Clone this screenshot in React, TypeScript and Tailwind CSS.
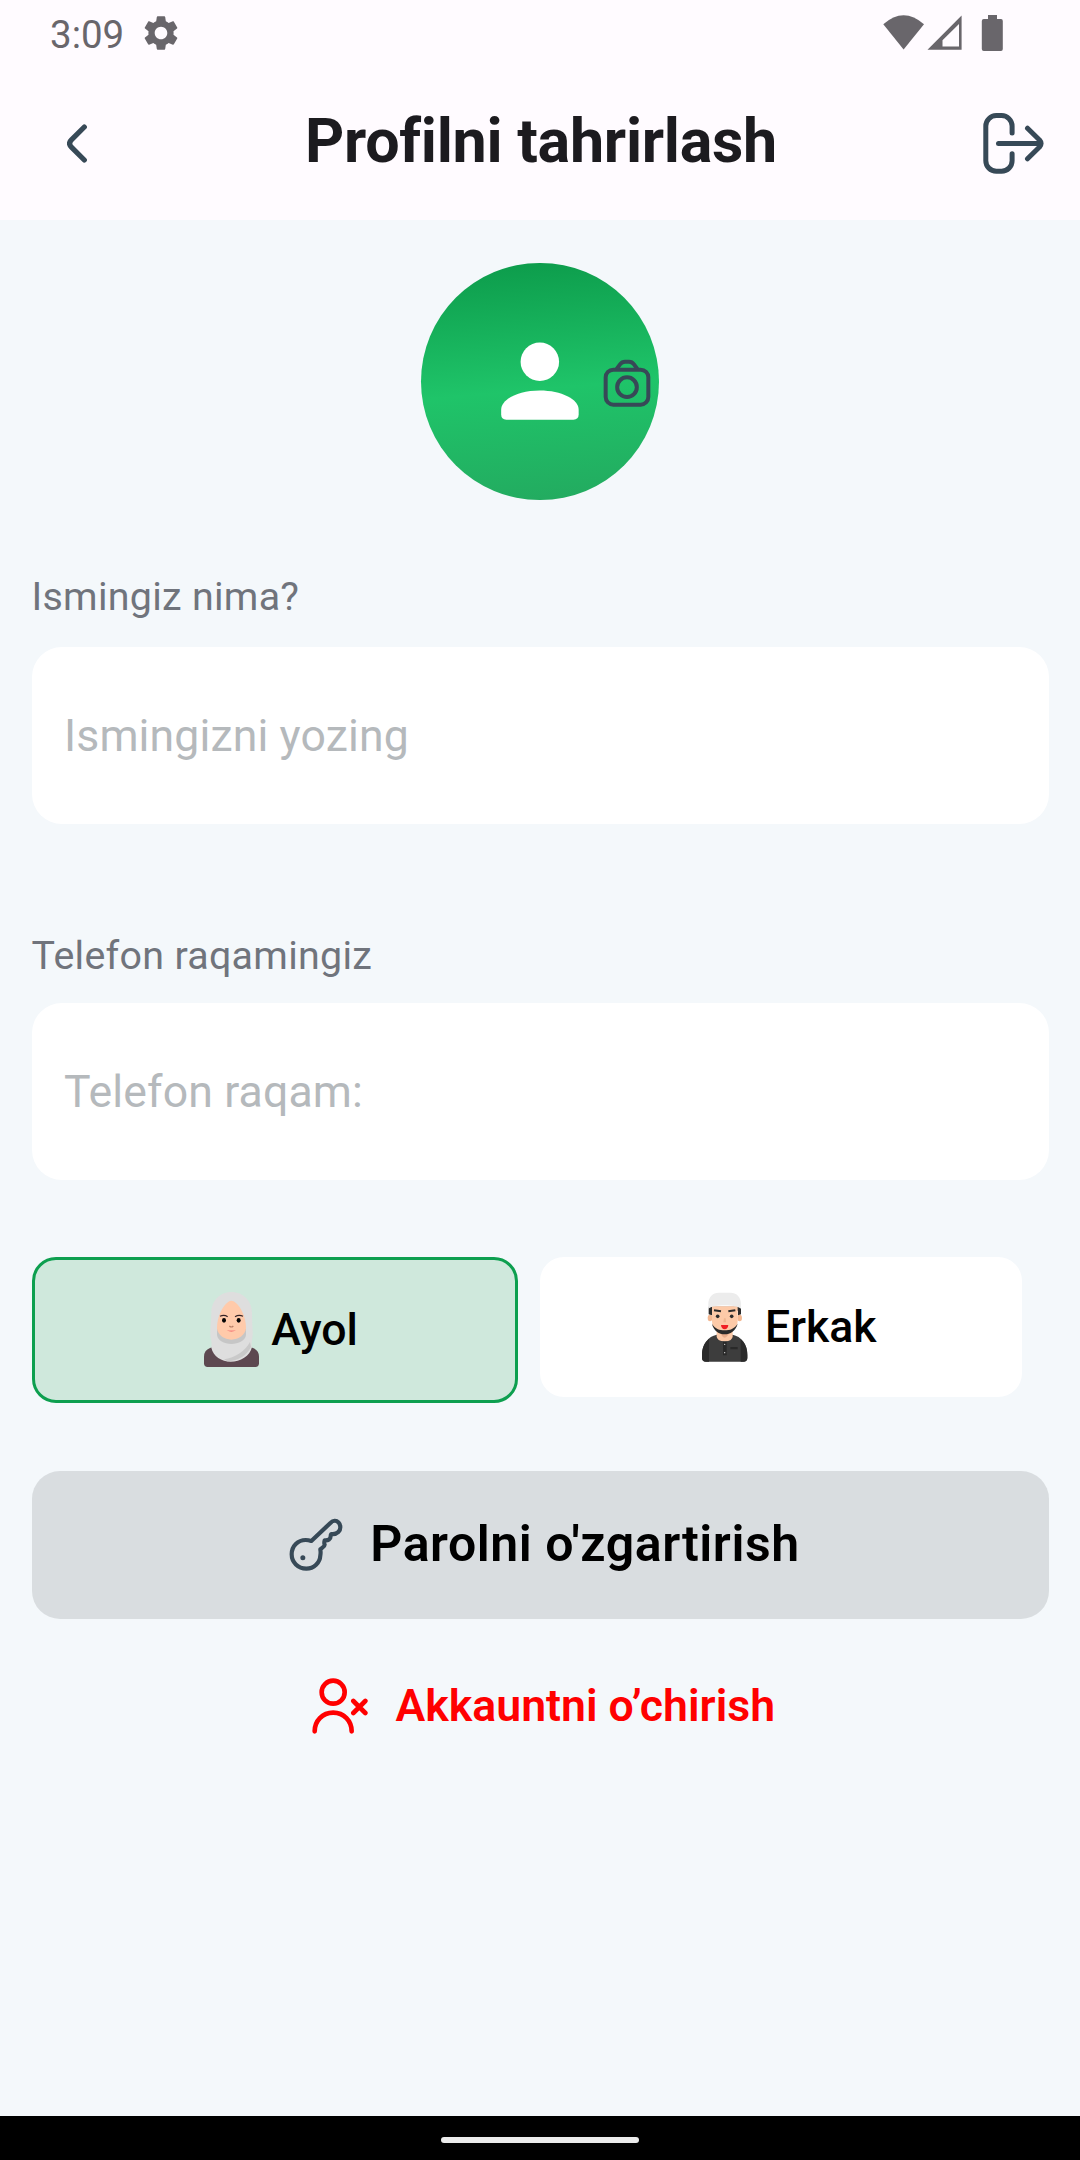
import React from "react";

function GearIcon() {
  return (
    <svg className="h-[42px] w-[42px]" viewBox="0 0 24 24" fill="#69666b">
      <path d="M19.14 12.94c.04-.3.06-.61.06-.94 0-.32-.02-.64-.07-.94l2.03-1.58c.18-.14.23-.41.12-.61l-1.92-3.32c-.12-.22-.37-.29-.59-.22l-2.39.96c-.5-.38-1.03-.7-1.62-.94l-.36-2.54c-.04-.24-.24-.41-.48-.41h-3.84c-.24 0-.43.17-.47.41l-.36 2.54c-.59.24-1.13.57-1.62.94l-2.39-.96c-.22-.08-.47 0-.59.22L2.74 8.87c-.12.21-.08.47.12.61l2.03 1.58c-.05.3-.09.63-.09.94s.02.64.07.94l-2.03 1.58c-.18.14-.23.41-.12.61l1.92 3.32c.12.22.37.29.59.22l2.39-.96c.5.38 1.03.7 1.62.94l.36 2.54c.05.24.24.41.48.41h3.84c.24 0 .44-.17.47-.41l.36-2.54c.59-.24 1.13-.56 1.62-.94l2.39.96c.22.08.47 0 .59-.22l1.92-3.32c.12-.22.07-.47-.12-.61l-2.01-1.58zM12 15.6c-1.98 0-3.6-1.62-3.6-3.6s1.62-3.6 3.6-3.6 3.6 1.62 3.6 3.6-1.62 3.6-3.6 3.6z" />
    </svg>
  );
}

function StatusIcons() {
  return (
    <svg className="h-[40px] w-[124px]" viewBox="881 13 124 40" fill="#69666b">
      <path d="M883.3 24.2Q903.6 6.200 924 24.200L903.600 49.500Z" />
      <path
        fillRule="evenodd"
        d="M961.600 15.500V49.700H927.500ZM959 24L942.500 40.300V46.600H959Z"
      />
      <path d="M988 15H997V19H1001Q1002.800 19 1002.800 21V49Q1002.800 51 1001 51H983.800Q981.800 51 981.800 49V21Q981.800 19 983.800 19H988Z" />
    </svg>
  );
}

function BackIcon() {
  return (
    <svg
      className="h-[39px] w-[20px]"
      viewBox="67 123.500 20 39"
      fill="none"
      stroke="#374957"
      strokeWidth="5.200"
      strokeLinecap="round"
    >
      <path d="M84.300 126.500L71.400 139.400Q67.800 143 71.400 146.600L84.300 159.500" />
    </svg>
  );
}

function LogoutIcon() {
  return (
    <svg
      className="h-[61px] w-[61px]"
      viewBox="983.500 112.500 61 61"
      fill="none"
      stroke="#374957"
      strokeWidth="5"
      strokeLinecap="round"
    >
      <path d="M1012.600 132.500V125.600A10.500 10.500 0 0 0 1002.100 115.100H996.800A10.500 10.500 0 0 0 986.300 125.600V160.200A10.500 10.500 0 0 0 996.800 170.700H1002.100A10.500 10.500 0 0 0 1012.600 160.200V153.300" />
      <path d="M999 143H1040.500" />
      <path d="M1028 127.700L1040 139.500Q1043 143 1040 146.500L1028 158.300" strokeLinejoin="round" />
    </svg>
  );
}

function PersonIcon() {
  return (
    <svg className="h-[78px] w-[78px]" viewBox="303 276 235 235" fill="#fff">
      <circle cx="420" cy="335.500" r="58" />
      <path d="M303.500 480C303.500 448 355 422 420 422S537 448 537 480V494Q537 510 521 510H319Q303.500 510 303.500 494Z" />
    </svg>
  );
}

function CameraIcon() {
  return (
    <svg
      className="absolute left-[182px] top-[96px] h-[48px] w-[48px]"
      viewBox="609 325 144 144"
      fill="none"
      stroke="#374957"
      strokeWidth="12"
    >
      <rect x="617" y="357" width="128" height="105" rx="23" />
      <path d="M650 355L660 341Q666 333 675 333H687Q696 333 702 341L712 355" />
      <circle cx="681" cy="409.500" r="29.500" />
    </svg>
  );
}

function WomanIcon() {
  return (
    <svg className="h-[75px] w-[55px] shrink-0" viewBox="72 153 165 225">
      <path
        d="M72 347Q72 328 90 321L105 316H204L219 321Q237 328 237 347V367Q237 378 226 378H83Q72 378 72 367Z"
        fill="#5d4850"
      />
      <path
        d="M154 153C119 153 94 180 94 215C94 237 91 252 91 275C91 295 97 300 94 320C99 346 125 362 152 362C181 362 210 346 216 318C213 301 219 290 218 272C217 250 216 235 216 215C216 180 190 153 154 153Z"
        fill="#dedede"
      />
      <path d="M111 262V282C113 298 132 309 154 309S196 298 198 282V262Z" fill="#c6c6c6" />
      <path d="M210 303C196 330 165 350 132 355L142 361C172 360 200 345 213 318Z" fill="#c9c9c9" />
      <path
        d="M154 179C139 179 111 216 111 262C113 282 133 296 154 296S196 282 198 262C198 216 170 179 154 179Z"
        fill="#ffcaaa"
      />
      <path d="M120 226Q132 220 143 227M165 227Q177 220 189 226" fill="none" stroke="#352427" strokeWidth="3.500" />
      <ellipse cx="132" cy="238" rx="6" ry="7" fill="#050505" />
      <ellipse cx="176" cy="238" rx="6" ry="7" fill="#050505" />
      <path d="M148 255Q154 261 160 255" fill="none" stroke="#b98068" strokeWidth="3.500" />
      <path d="M140 267Q154 270 168 267Q154 278 140 267Z" fill="#f57a78" />
    </svg>
  );
}

function ManIcon() {
  return (
    <svg className="h-[70px] w-[46px] shrink-0" viewBox="66 152 138 210">
      <path
        d="M110 280C85 285 66 308 66 340V350Q66 361 78 361H190Q202 361 202 350V340C202 308 183 285 158 280Z"
        fill="#3d3d3d"
      />
      <path
        d="M87 293C73 304 66 320 66 340V350Q66 361 78 361H87ZM182 293C195 304 202 320 202 340V350Q202 361 190 361H182Z"
        fill="#2a2a2a"
      />
      <path d="M110 268H158V285Q158 300 134 300T110 285Z" fill="#fdcaa8" />
      <path d="M122 276H147Q142 288 134 289Q126 288 122 276Z" fill="#e9ad8c" />
      <ellipse cx="90" cy="230" rx="7" ry="10" fill="#f3b892" />
      <ellipse cx="179" cy="230" rx="7" ry="10" fill="#f3b892" />
      <path d="M86 196L183 196V219L174 222V208H96V222L86 219Z" fill="#2b2b2b" />
      <path d="M96 195H173V238C173 260 154 276 134 276S96 260 96 238Z" fill="#fdcaa8" />
      <path
        d="M96 247C105 262 118 267 134 267S163 262 173 247C168 268 150 279 134 279S100 268 96 247Z"
        fill="#2b2b2b"
      />
      <path d="M85 202V185C87 165 99 154 116 154H152C169 154 181 165 183 185V202C168 188 100 188 85 202Z" fill="#ececec" />
      <path d="M102 207L123 210M166 207L145 210" stroke="#2b2b2b" strokeWidth="6" />
      <circle cx="113" cy="225" r="5.500" fill="#2b2b2b" />
      <circle cx="155" cy="225" r="5.500" fill="#2b2b2b" />
      <path d="M132 231H137L138 243H130Z" fill="#efb791" />
      <path d="M123 251H145Q144 263 134 264Q124 263 123 251Z" fill="#f01f24" />
      <path d="M129 301H140V342H129ZM151 317H173V324H151Z" fill="#292929" />
      <circle cx="134" cy="309" r="2" fill="#ddd" />
      <circle cx="134" cy="334" r="2" fill="#ddd" />
    </svg>
  );
}

function KeyIcon() {
  return (
    <svg
      className="h-[53px] w-[54px] shrink-0"
      viewBox="56 88 162 159"
      fill="none"
      stroke="#374957"
      strokeWidth="12.500"
      strokeLinejoin="round"
    >
      <path d="M123 157L181 102C188 95 198 94 204 101C212 109 212 122 204 130C198 136 192 137 183 136C181 138 181 139 181 142C181 152 174 156 163 155C162 159 161 165 163 168C163 174 155 177 150 182C150 187 152 188 150 200C149 222 131 240 108 240C83 240 64 221 64 197C64 172 83 154 106 154C112 154 117 155 123 157Z" />
      <circle cx="97.500" cy="207" r="7.500" fill="#374957" stroke="none" />
    </svg>
  );
}

function UserRemoveIcon() {
  return (
    <svg
      className="h-[56px] w-[56px] shrink-0"
      viewBox="68 84 168 168"
      fill="none"
      stroke="#ff0000"
      strokeWidth="14"
      strokeLinecap="round"
    >
      <circle cx="131.500" cy="126.500" r="34.500" />
      <path d="M76 244C76 213 99 188 131.500 188S187 213 187 244" />
      <path d="M192 153L228 189M228 153L192 189" />
    </svg>
  );
}

function Field({ label, placeholder, className }: { label: string; placeholder: string; className: string }) {
  return (
    <label className={`flex flex-col ${className}`}>
      <span className="h-[48px] text-[39.400px] leading-[48px] tracking-[0.280px] text-[#70747c]">{label}</span>
      <input
        placeholder={placeholder}
        className="h-[176.500px] w-full rounded-[30px] bg-white px-[32.500px] pt-[2px] text-[44.600px] tracking-[0.120px] outline-none placeholder:text-[#b5b9bc]"
      />
    </label>
  );
}

export default function App() {
  return (
    <div className="flex h-[2160px] w-[1080px] flex-col overflow-hidden bg-[#f4f8fb] font-[Roboto,sans-serif]">
      <header className="h-[220px] bg-[#fffbff]">
        <div className="flex h-[66px] items-center pl-[50px] pr-[75px]">
          <span className="pt-[3px] text-[38.500px] leading-[48px] text-[#69666b]">3:09</span>
          <span className="ml-[16px]">
            <GearIcon />
          </span>
          <span className="ml-auto">
            <StatusIcons />
          </span>
        </div>
        <div className="flex h-[154px] items-center justify-between pl-[67px] pr-[36px]">
          <BackIcon />
          <h1 className="-mt-[4px] ml-[12px] text-[61px] font-bold leading-[72px] tracking-[-0.280px] text-[#1c1b1f]">
            Profilni tahrirlash
          </h1>
          <LogoutIcon />
        </div>
      </header>

      <main className="flex grow flex-col px-[31.500px] pt-[42.500px]">
        <div className="relative flex h-[237px] w-[238px] items-center justify-center self-center rounded-full bg-[linear-gradient(175deg,#0c9a4a_0%,#1fc469_53%,#23a95f_100%)]">
          <PersonIcon />
          <CameraIcon />
        </div>

        <div className="mt-[73px] flex flex-col gap-[108.500px]">
          <Field className="gap-[26.500px]" label="Ismingiz nima?" placeholder="Ismingizni yozing" />
          <Field className="gap-[23px]" label="Telefon raqamingiz" placeholder="Telefon raqam:" />
        </div>

        <div className="mt-[77.500px] flex items-start gap-[22.500px] text-[44.600px] font-medium text-black">
          <button className="flex h-[145.500px] w-[486px] items-center justify-center gap-[12px] rounded-[24px] border-[3px] border-[#0d9f4f] bg-[#cfe8dc] pl-[13px]">
            <WomanIcon />
            <span className="pt-[1px]">Ayol</span>
          </button>
          <button className="flex h-[139.500px] w-[481.500px] items-center justify-center gap-[17px] rounded-[24px] bg-white pl-[17px]">
            <ManIcon />
            <span className="pt-[1px]">Erkak</span>
          </button>
        </div>

        <button className="mt-[68px] flex h-[148px] items-center justify-center gap-[27px] rounded-[28px] bg-[#d9dde0] pl-[9px] text-[50px] font-semibold tracking-[0.560px] text-black">
          <KeyIcon />
          Parolni o'zgartirish
        </button>
        <button className="mt-[51.500px] flex h-[72px] items-center justify-center gap-[27px] pl-[7.500px] text-[44.600px] font-semibold text-[#ff0000]">
          <UserRemoveIcon />
          Akkauntni o’chirish
        </button>
      </main>

      <footer className="flex h-[44px] items-center justify-center bg-black pt-[4px]">
        <div className="h-[6px] w-[198px] rounded-full bg-[#ececec]" />
      </footer>
    </div>
  );
}
